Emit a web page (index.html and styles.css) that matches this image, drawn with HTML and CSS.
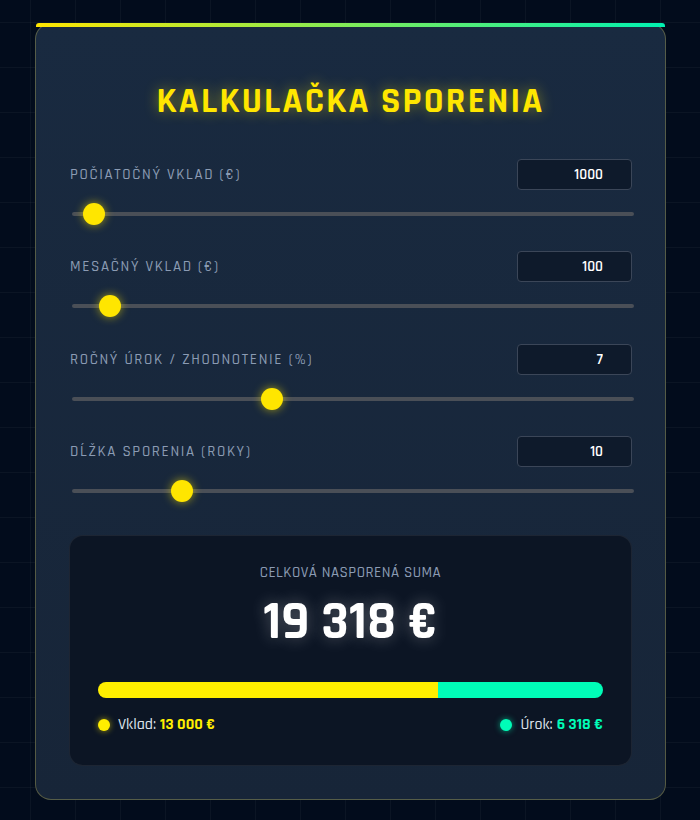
FILE: index.html
```html
<!DOCTYPE html>
<html lang="sk">
<head>
<meta charset="utf-8">
<title>Kalkulačka sporenia</title>
<link rel="stylesheet" href="styles.css">
</head>
<body>
<main class="card">
  <h1 class="title">KALKULAČKA SPORENIA</h1>

  <div class="field">
    <div class="field-head">
      <label class="label" for="i1">POČIATOČNÝ VKLAD (€)</label>
      <input class="num" id="i1" type="text" value="1000">
    </div>
    <input class="range" type="range" min="0" max="50000" step="100" value="1000">
  </div>

  <div class="field">
    <div class="field-head">
      <label class="label" for="i2">MESAČNÝ VKLAD (€)</label>
      <input class="num" id="i2" type="text" value="100">
    </div>
    <input class="range" type="range" min="0" max="2000" step="10" value="100">
  </div>

  <div class="field">
    <div class="field-head">
      <label class="label" for="i3">ROČNÝ ÚROK / ZHODNOTENIE (%)</label>
      <input class="num" id="i3" type="text" value="7">
    </div>
    <input class="range" type="range" min="0" max="20" step="0.1" value="7">
  </div>

  <div class="field">
    <div class="field-head">
      <label class="label" for="i4">DĹŽKA SPORENIA (ROKY)</label>
      <input class="num" id="i4" type="text" value="10">
    </div>
    <input class="range" type="range" min="1" max="50" step="1" value="10">
  </div>

  <section class="result">
    <div class="result-label">CELKOVÁ NASPORENÁ SUMA</div>
    <div class="result-value">19 318 €</div>
    <div class="bar">
      <div class="bar-dep" style="width: 67.3%"></div>
      <div class="bar-int"></div>
    </div>
    <div class="legend">
      <div class="legend-item"><span class="dot dot-y"></span>Vklad: <b class="val-y">13 000 €</b></div>
      <div class="legend-item"><span class="dot dot-t"></span>Úrok: <b class="val-t">6 318 €</b></div>
    </div>
  </section>
</main>
</body>
</html>
```

FILE: styles.css
```css
* { box-sizing: border-box; }

html, body {
  margin: 0;
  padding: 0;
}

body {
  min-height: 820px;
  background-color: #020c1c;
  background-image:
    linear-gradient(rgba(255,255,255,0.035) 1px, transparent 1px),
    linear-gradient(90deg, rgba(255,255,255,0.035) 1px, transparent 1px);
  background-size: 45px 45px;
  background-position: 30px 22px;
  font-family: "Rajdhani", "Liberation Sans Narrow", "DejaVu Sans Condensed", "Liberation Sans", sans-serif;
  padding-top: 23px;
}

.card {
  position: relative;
  width: 631px;
  margin: 0 0 0 35px;
  background: linear-gradient(180deg, #192a40 0%, #172538 100%);
  border: 1px solid rgba(200, 190, 90, 0.35);
  border-radius: 16px;
  padding: 58px 33px 33px;
}

.card::before {
  content: "";
  position: absolute;
  top: -1px;
  left: 0;
  right: 0;
  height: 4px;
  border-radius: 3px 3px 0 0;
  background: linear-gradient(90deg, #ffe600 0%, #00f2b2 100%);
}

.title {
  margin: 0 0 37px;
  text-align: center;
  font-size: 36px;
  line-height: 40px;
  font-weight: 700;
  letter-spacing: 2.2px;
  color: #ffe600;
  text-shadow: 0 0 14px rgba(255, 230, 0, 0.45);
}

.field {
  margin-bottom: 26.4px;
}

.field-head {
  display: flex;
  justify-content: space-between;
  align-items: center;
  height: 31px;
  margin-bottom: 13px;
}

.label {
  font-size: 15px;
  font-weight: 500;
  letter-spacing: 1.65px;
  color: #8b9bb3;
  padding-left: 1px;
}

.num {
  width: 115px;
  height: 31px;
  background: #0e1a2b;
  border: 1px solid #3b4658;
  border-radius: 4px;
  color: #ffffff;
  font-family: inherit;
  font-size: 15px;
  font-weight: 600;
  text-align: right;
  padding: 0 28px 0 8px;
  outline: none;
}

.range {
  -webkit-appearance: none;
  appearance: none;
  display: block;
  width: 562px;
  height: 22px;
  margin: 0 0 0 3px;
  background: transparent;
}

.range::-webkit-slider-runnable-track {
  height: 4px;
  background: #4a4f57;
  border-radius: 2px;
}

.range::-webkit-slider-thumb {
  -webkit-appearance: none;
  appearance: none;
  width: 22px;
  height: 22px;
  margin-top: -9px;
  border-radius: 50%;
  background: #ffe600;
  box-shadow: 0 0 10px rgba(255, 230, 0, 0.6);
  border: none;
}

.field:last-of-type {
  margin-bottom: 0;
}

.result {
  margin-top: 33px;
  background: #0c1524;
  border: 1px solid rgba(255, 255, 255, 0.07);
  border-radius: 14px;
  padding: 28px 28px 31px;
  text-align: center;
}

.result-label {
  font-size: 15px;
  font-weight: 500;
  line-height: 18px;
  letter-spacing: 0.5px;
  color: #8b9bb3;
}

.result-value {
  margin-top: 11px;
  font-size: 54px;
  line-height: 60px;
  font-weight: 700;
  color: #ffffff;
  text-shadow: 0 0 16px rgba(255, 255, 255, 0.3);
}

.bar {
  display: flex;
  margin-top: 29px;
  height: 16px;
  border-radius: 8px;
  overflow: hidden;
}

.bar-dep {
  background: #ffee00;
}

.bar-int {
  flex: 1;
  background: #00fdb8;
}

.legend {
  display: flex;
  justify-content: space-between;
  margin-top: 18px;
  line-height: 18px;
  font-size: 16px;
  font-weight: 500;
  color: #dde3ec;
}

.legend-item {
  display: flex;
  align-items: center;
}

.legend-item b {
  margin-left: 4px;
  font-weight: 700;
}

.dot {
  width: 12px;
  height: 12px;
  border-radius: 50%;
  margin: 0 8px 0 0;
}

.dot-y {
  background: #ffee00;
  box-shadow: 0 0 6px rgba(255, 230, 0, 0.6);
}

.dot-t {
  background: #00fdb8;
  box-shadow: 0 0 6px rgba(0, 253, 184, 0.6);
}

.val-y { color: #ffee00; }
.val-t { color: #00fdb8; }
```
